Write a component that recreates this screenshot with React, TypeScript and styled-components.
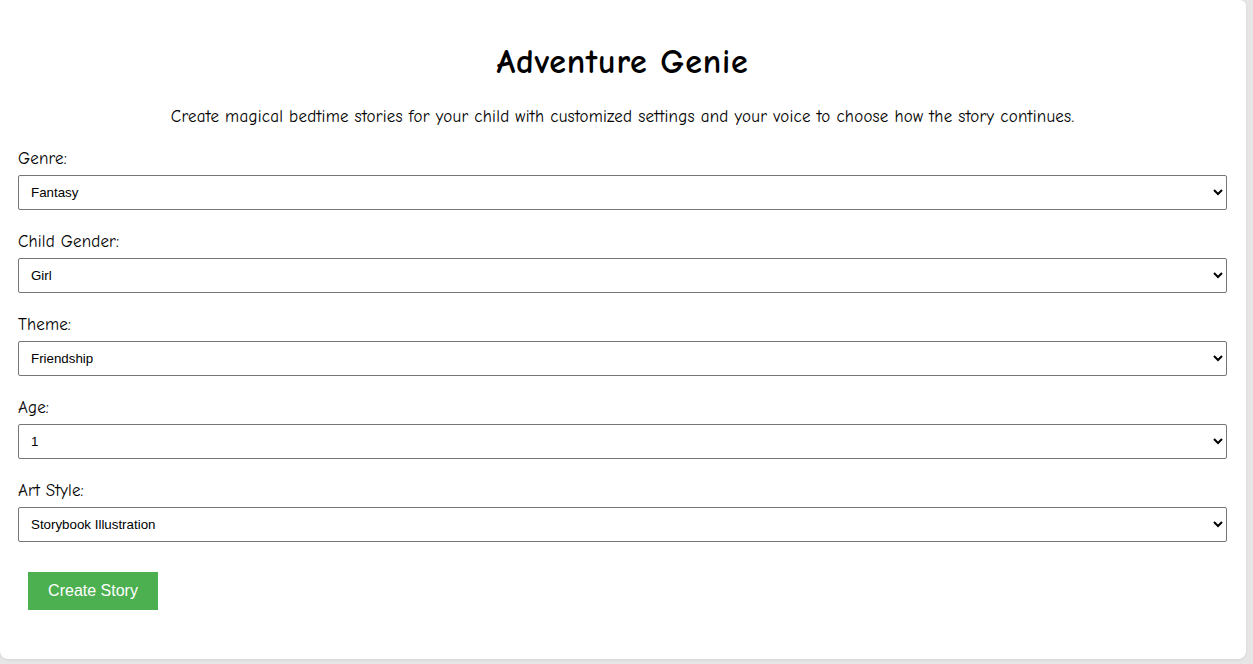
import React from "react";
import styled, { createGlobalStyle } from "styled-components";

const GlobalStyle = createGlobalStyle`
  html, body {
    margin: 0;
    padding: 0;
    background: #e6e6e6;
  }
  body {
    font-family: "Comic Sans MS", "Comic Neue", "DejaVu Sans", sans-serif;
    color: #000;
  }
`;

const Page = styled.div`
  width: 1253px;
  height: 664px;
  overflow: hidden;
  background: #e6e6e6;
`;

const Card = styled.div`
  width: 1246px;
  height: 659px;
  box-sizing: border-box;
  background: #fff;
  border-radius: 0 6px 8px 8px;
  box-shadow: 0 1px 3px rgba(0, 0, 0, 0.08);
  padding: 38px 19px 0 18px;
  display: flex;
  flex-direction: column;
`;

const Title = styled.h1`
  margin: 0;
  text-align: center;
  font-size: 34px;
  line-height: 48px;
  font-weight: bold;
  letter-spacing: 0.8px;
`;

const Subtitle = styled.p`
  margin: 20px 0 0;
  text-align: center;
  font-size: 17px;
  line-height: 22px;
  letter-spacing: 0.24px;
`;

const Form = styled.div`
  margin-top: 20px;
  display: flex;
  flex-direction: column;
`;

const Label = styled.label`
  display: block;
  font-size: 17px;
  line-height: 22px;
  letter-spacing: 0.15px;
  margin-bottom: 5px;
`;

const Select = styled.select`
  display: block;
  width: 100%;
  height: 35px;
  box-sizing: border-box;
  padding: 0 8px;
  margin: 0 0 21px;
  font-family: Arial, "Liberation Sans", sans-serif;
  font-size: 13.33px;
  color: #000;
  background: #fff;
  border: 1px solid #767676;
  border-radius: 2px;
`;

const Button = styled.button`
  align-self: flex-start;
  margin: 9px 0 0 10px;
  width: 130px;
  height: 38px;
  padding: 0;
  border: none;
  border-radius: 0;
  background: #4caf50;
  color: #fff;
  font-family: Arial, "Liberation Sans", sans-serif;
  font-size: 16px;
  cursor: pointer;
`;

type Field = { label: string; value: string; options: string[] };

const fields: Field[] = [
  { label: "Genre:", value: "Fantasy", options: ["Fantasy", "Adventure", "Mystery", "Science Fiction"] },
  { label: "Child Gender:", value: "Girl", options: ["Girl", "Boy"] },
  { label: "Theme:", value: "Friendship", options: ["Friendship", "Courage", "Kindness"] },
  { label: "Age:", value: "1", options: ["1", "2", "3", "4", "5", "6", "7", "8", "9", "10"] },
  { label: "Art Style:", value: "Storybook Illustration", options: ["Storybook Illustration", "Watercolor", "Cartoon"] },
];

export default function App() {
  return (
    <Page>
      <GlobalStyle />
      <Card>
        <Title>Adventure Genie</Title>
        <Subtitle>
          Create magical bedtime stories for your child with customized settings and your voice to choose how the story continues.
        </Subtitle>
        <Form>
          {fields.map((f, i) => (
            <React.Fragment key={f.label}>
              <Label htmlFor={`f${i}`}>{f.label}</Label>
              <Select id={`f${i}`} defaultValue={f.value}>
                {f.options.map((o) => (
                  <option key={o} value={o}>
                    {o}
                  </option>
                ))}
              </Select>
            </React.Fragment>
          ))}
          <Button>Create Story</Button>
        </Form>
      </Card>
    </Page>
  );
}
